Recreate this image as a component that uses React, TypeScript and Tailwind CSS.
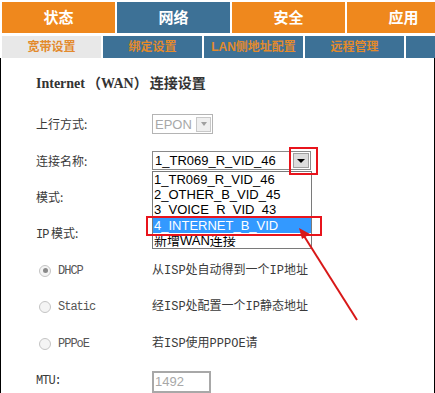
import React from "react";

const cjk = '"Noto Sans CJK SC", sans-serif';
const arial = '"Liberation Sans", "Noto Sans CJK SC", sans-serif';
const mono = '"Liberation Mono", "Noto Sans CJK SC", monospace';
const serif = '"Liberation Serif", "Noto Sans CJK SC", serif';

function Radio({ checked }: { checked?: boolean }) {
  return (
    <span className="w-[12px] h-[12px] rounded-full border border-[#c4c4c4] bg-[#f4f4f4] flex items-center justify-center shrink-0">
      {checked && <span className="w-[5px] h-[5px] rounded-full bg-[#8a8a8a]" />}
    </span>
  );
}

function Row({ label, children }: { label: React.ReactNode; children?: React.ReactNode }) {
  return (
    <div className="h-[36.6px] flex items-center">
      <div className="w-[116px] shrink-0 text-[12px] text-[#3a3a3a]" style={{ fontFamily: cjk }}>
        {label}
      </div>
      {children}
    </div>
  );
}

function RadioRow({ checked, name, desc }: { checked?: boolean; name: string; desc: string }) {
  return (
    <div className="h-[36.6px] flex items-center">
      <div className="w-[116px] shrink-0 flex items-center pl-[3px]">
        <Radio checked={checked} />
        <span className="ml-[7px] text-[12px] tracking-[-1px] text-[#555]" style={{ fontFamily: mono }}>
          {name}
        </span>
      </div>
      <span className="text-[12px] text-[#3a3a3a]" style={{ fontFamily: mono }}>
        {desc}
      </span>
    </div>
  );
}

export default function App() {
  const tabs = [
    { t: "状态", blue: false },
    { t: "网络", blue: true },
    { t: "安全", blue: false },
    { t: "应用", blue: false },
  ];
  const subs = ["宽带设置", "绑定设置", "LAN侧地址配置", "远程管理", ""];
  const items = ["1_TR069_R_VID_46", "2_OTHER_B_VID_45", "3_VOICE_R_VID_43", "4_INTERNET_B_VID", "新增WAN连接"];

  return (
    <div className="relative w-[435px] h-[393px] bg-white overflow-hidden flex flex-col">
      {/* top tabs */}
      <div className="flex gap-[2px] pl-[2px] pt-[2px] shrink-0">
        {tabs.map((x) => (
          <div
            key={x.t}
            className={`w-[113px] h-[31px] shrink-0 flex items-center justify-center text-white font-bold text-[15px] ${
              x.blue ? "bg-[#3d7196]" : "bg-[#ef881d]"
            }`}
            style={{ fontFamily: cjk }}
          >
            {x.t}
          </div>
        ))}
      </div>
      {/* sub tabs */}
      <div className="flex gap-[2px] pl-[2px] mt-[3px] shrink-0">
        {subs.map((s, i) => (
          <div
            key={i}
            className={`w-[99px] h-[22px] shrink-0 flex items-center justify-center font-bold text-[12px] text-[#e38a2c] ${
              i === 0 ? "bg-[#e8e8e8]" : "bg-[#3d7196]"
            }`}
            style={{ fontFamily: arial }}
          >
            {s}
          </div>
        ))}
      </div>
      {/* content */}
      <div className="flex-1 border-l border-r border-b border-black pl-[35px] pt-[15px]">
        <div className="h-[20px] flex items-center font-bold text-[14px] text-[#333]" style={{ fontFamily: serif }}>
          <span>Internet</span>
          <span className="ml-[2px]">（WAN）</span>
          <span className="ml-[2px]">连接设置</span>
        </div>
        <div className="mt-[13px]">
          <Row label="上行方式:">
            <div className="w-[61px] h-[20px] border border-[#b4b4b4] flex items-center justify-between pl-[2px] pr-[1px]">
              <span className="text-[13px] text-[#a8a8a8]" style={{ fontFamily: arial }}>
                EPON
              </span>
              <span className="w-[15px] h-[15px] border border-[#c8c8c8] bg-[#efefef] flex items-center justify-center">
                <span className="w-0 h-0 border-l-[3px] border-r-[3px] border-t-[4px] border-l-transparent border-r-transparent border-t-[#a0a0a0]" />
              </span>
            </div>
          </Row>
          <Row label="连接名称:">
            <div className="w-[159px] h-[19px] border border-[#8a8a8a] flex items-center justify-between pl-[2px] pr-[1px]">
              <span className="text-[13px] text-black leading-none" style={{ fontFamily: arial }}>
                1_TR069_R_VID_46
              </span>
              <span className="w-[16px] h-[15px] border border-[#a0a0a0] bg-[#dcdcdc] flex items-center justify-center">
                <span className="w-0 h-0 border-l-[4px] border-r-[4px] border-t-[4px] border-l-transparent border-r-transparent border-t-black" />
              </span>
            </div>
          </Row>
          <Row label="模式:" />
          <Row
            label={
              <>
                <span style={{ fontFamily: mono }} className="text-[12px] tracking-[-1px]">
                  IP
                </span>{" "}
                模式:
              </>
            }
          />
          <RadioRow checked name="DHCP" desc="从ISP处自动得到一个IP地址" />
          <RadioRow name="Static" desc="经ISP处配置一个IP静态地址" />
          <RadioRow name="PPPoE" desc="若ISP使用PPPOE请" />
          <Row
            label={
              <span style={{ fontFamily: mono }} className="text-[12px] tracking-[-1px]">
                MTU:
              </span>
            }
          >
            <div className="w-[59px] h-[22px] border-2 border-[#a8a8a8] mt-[3px] flex items-center pl-[1px]">
              <span className="text-[13px] text-[#a8a8a8]" style={{ fontFamily: arial }}>
                1492
              </span>
            </div>
          </Row>
        </div>
      </div>

      {/* dropdown list overlay */}
      <div className="absolute left-[152px] top-[171px] w-[160px] h-[78px] bg-white border border-[#7a7a7a] flex flex-col">
        {items.map((it, i) => (
          <div
            key={it}
            className={`h-[15.2px] flex items-center pl-[1px] text-[13px] leading-none ${
              i === 3 ? "bg-[#3399ff] text-white" : "text-black"
            }`}
            style={{ fontFamily: arial }}
          >
            {it}
          </div>
        ))}
      </div>

      {/* red highlight boxes */}
      <div className="absolute left-[146px] top-[216px] w-[176px] h-[20px] border-2 border-[#e8141c]" />
      <div className="absolute left-[289px] top-[147px] w-[29px] h-[28px] border-2 border-[#e8141c]" />

      {/* red arrow */}
      <svg className="absolute left-0 top-0" width="435" height="393" viewBox="0 0 435 393">
        <line x1="357" y1="320" x2="304" y2="236" stroke="#d81818" strokeWidth="2" />
        <polygon points="299,228 310,234 302,239" fill="#d81818" />
      </svg>
    </div>
  );
}
